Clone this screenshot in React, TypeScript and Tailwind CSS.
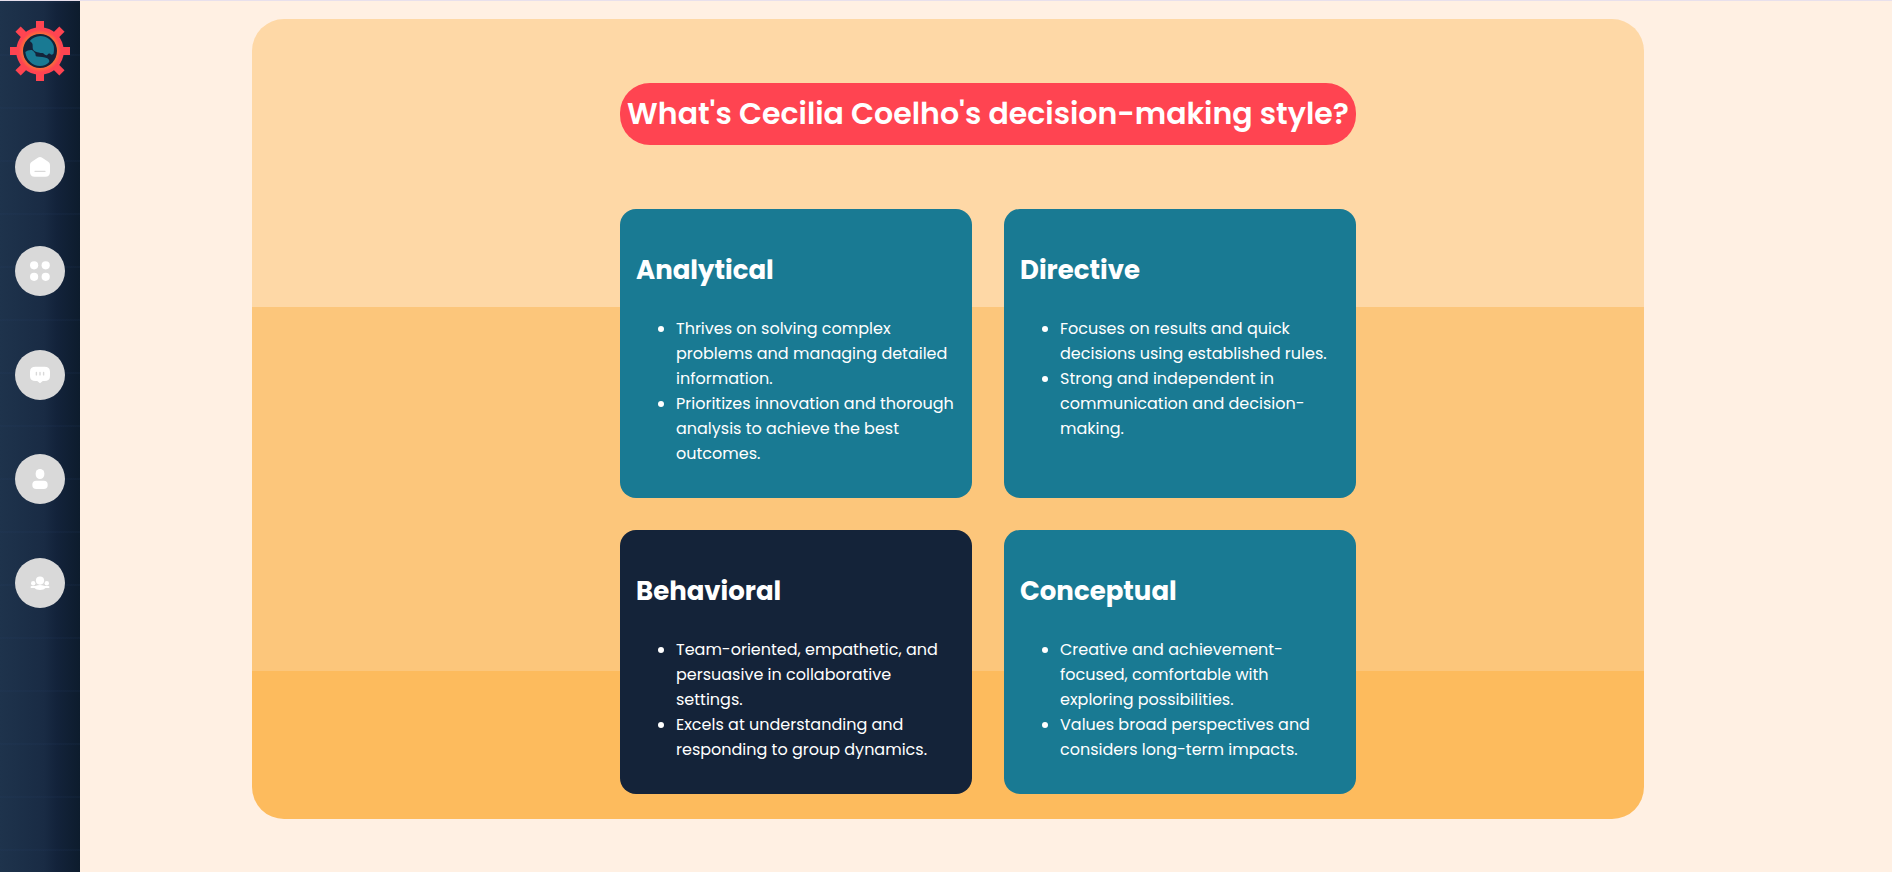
import type { ReactNode } from "react";

type Style = { name: string; traits: string[]; selected?: boolean };

const styles: Style[] = [
  {
    name: "Analytical",
    traits: [
      "Thrives on solving complex problems and managing detailed information.",
      "Prioritizes innovation and thorough analysis to achieve the best outcomes.",
    ],
  },
  {
    name: "Directive",
    traits: [
      "Focuses on results and quick decisions using established rules.",
      "Strong and independent in communication and decision-making.",
    ],
  },
  {
    name: "Behavioral",
    selected: true,
    traits: [
      "Team-oriented, empathetic, and persuasive in collaborative settings.",
      "Excels at understanding and responding to group dynamics.",
    ],
  },
  {
    name: "Conceptual",
    traits: [
      "Creative and achievement-focused, comfortable with exploring possibilities.",
      "Values broad perspectives and considers long-term impacts.",
    ],
  },
];

const navItems: { label: string; icon: ReactNode }[] = [
  {
    label: "Home",
    icon: (
      <>
        <path d="M25 15c.8 0 1.400.3 2.200.8l5.600 3.600c1.500 1 2.200 2 2.200 3.800v6.800c0 3.200-1.600 4.700-4.700 4.700H19.700c-3.100 0-4.700-1.500-4.700-4.700v-6.800c0-1.800.7-2.800 2.200-3.800l5.600-3.600c.8-.5 1.400-.8 2.200-.8z" />
        <path d="M20 29.300h10" stroke="#d9d9d9" strokeWidth="1.300" strokeLinecap="round" />
      </>
    ),
  },
  {
    label: "Dashboard",
    icon: (
      <>
        <circle cx="19.100" cy="19.300" r="4.100" />
        <circle cx="30.700" cy="19.300" r="4.100" />
        <circle cx="19.100" cy="30.800" r="4.100" />
        <circle cx="30.700" cy="30.800" r="4.100" />
      </>
    ),
  },
  {
    label: "Messages",
    icon: (
      <>
        <path d="M20.500 16.700h9c3.700 0 5.500 1.600 5.500 5v4.300c0 3.400-1.800 5-5.500 5h-1.700L25 33.200 22.200 31h-1.700c-3.700 0-5.500-1.600-5.500-5v-4.300c0-3.400 1.800-5 5.500-5z" />
        <path d="M21.400 22.500v2.400M25 22.500v2.400M28.600 22.500v2.400" stroke="#d9d9d9" strokeWidth="1.400" strokeLinecap="round" />
      </>
    ),
  },
  {
    label: "Profile",
    icon: (
      <>
        <rect x="20.700" y="15" width="8.600" height="10" rx="4.200" />
        <rect x="17.300" y="26.800" width="15.400" height="8.200" rx="4" />
      </>
    ),
  },
  {
    label: "Team",
    icon: (
      <>
        <circle cx="25" cy="22.600" r="4.100" />
        <circle cx="18.200" cy="25.300" r="2.200" />
        <circle cx="31.800" cy="25.300" r="2.200" />
        <path d="M15.700 28.200c2-.5 4 .1 5.300-.4 2.400-1 5.600-1 8 0 1.300.5 3.300-.1 5.300.4v1.700h-3.800c-1 1.300-3 2-5.500 2s-4.500-.7-5.500-2h-3.800z" />
      </>
    ),
  },
];

function Logo() {
  return (
    <svg viewBox="0 0 60 60" className="size-[60px]" aria-hidden="true">
      <defs>
        <radialGradient id="ring" gradientUnits="userSpaceOnUse" cx="30" cy="30" r="24">
          <stop offset="0.700" stopColor="#fb7038" />
          <stop offset="0.880" stopColor="#ff4451" />
        </radialGradient>
      </defs>
      <g fill="#ff4451">
        {[0, 90, 180, 270].map((a) => (
          <rect key={a} x="26" y="0" width="8" height="10" transform={`rotate(${a} 30 30)`} />
        ))}
        {[45, 135, 225, 315].map((a) => (
          <rect key={a} x="26.300" y="-1" width="7.400" height="11" transform={`rotate(${a} 30 30)`} />
        ))}
      </g>
      <circle cx="30" cy="30" r="23.800" fill="url(#ring)" />
      <circle cx="30" cy="30" r="17" fill="#14243a" />
      <g fill="#197a93">
        <path d="M19.800 20C22 17 26 14.900 30.500 14.900c6.500 0 12 4.300 13.300 10.300.3 2.800.2 5.200-.3 7.300-.6 1.300-2.200 1.700-3.500.3-1-.8-1.700-.2-2.500.9-1.400 1.700-3.300-.7-4.300-1.500-1.400-.6-3 .2-4.500-.6-2-.5-3.600-.6-5.200-2.300-1.100-1.600-.7-3.900-.9-5.800-.1-1.500-1.800-2.400-2.800-3.500z" />
        <path d="M15.300 31c1.700-1.600 4.600-2.400 6.600-2 1.600.6 2.300 2.300 3.500 3.400.3 1.400-.2 2.600 1.600 3.200 3.200.4 7.400.4 10.300 1.600 1.300.7 2.400 2.200 1.900 3.700C36.900 43.500 33.800 45 30 45c-7.500 0-13.700-5.800-14.700-14z" />
      </g>
    </svg>
  );
}

function Sidebar() {
  return (
    <aside className="flex w-20 shrink-0 flex-col items-center bg-[repeating-linear-gradient(to_bottom,rgba(40,66,110,0.1)_0px,rgba(40,66,110,0.1)_2px,transparent_2px,transparent_53px),linear-gradient(to_right,#1e334c,#192b44_55%,#13233b_70%,#0d1c2d)] pt-5">
      <a href="#home" aria-label="Start page">
        <Logo />
      </a>
      <nav aria-label="Main" className="mt-[61px] flex flex-col gap-[54px]">
        {navItems.map(({ label, icon }) => (
          <a
            key={label}
            href={`#${label.toLowerCase()}`}
            aria-label={label}
            className="block size-[50px] rounded-full bg-[#d9d9d9]"
          >
            <svg viewBox="0 0 50 50" fill="#fff" className="size-full" aria-hidden="true">
              {icon}
            </svg>
          </a>
        ))}
      </nav>
    </aside>
  );
}

function StyleCard({ name, traits, selected }: Style) {
  return (
    <article className={`rounded-2xl p-4 ${selected ? "bg-[#142339]" : "bg-[#197a93]"}`}>
      <h2 className="my-7 text-[26px] leading-[35px] font-bold">{name}</h2>
      <ul className="mb-4 list-disc pl-10 text-base leading-[25px]">
        {traits.map((trait) => (
          <li key={trait}>{trait}</li>
        ))}
      </ul>
    </article>
  );
}

export default function App() {
  return (
    <div className="flex min-h-screen border-t border-[#e8e0ec] bg-[#fff0e3] font-['Poppins','Inter',sans-serif] text-white">
      <Sidebar />
      <main className="min-w-0 flex-1 pt-[18px] pr-[248px] pb-8 pl-[172px]">
        <section className="flex justify-center rounded-[32px] bg-[linear-gradient(to_bottom,#fed8a6_36%,#fcc67b_36%,#fcc67b_81.5%,#fdbb5d_81.5%)] pt-16 pb-[25px] pl-20">
          <div className="flex w-full max-w-[736px] flex-col gap-16">
            <h1 className="rounded-[30px] bg-[#ff4451] py-[7px] text-center text-[30px] leading-[48px] font-semibold whitespace-nowrap">
              What's Cecilia Coelho's decision-making style?
            </h1>
            <div className="grid grid-cols-2 gap-8">
              {styles.map((style) => (
                <StyleCard key={style.name} {...style} />
              ))}
            </div>
          </div>
        </section>
      </main>
    </div>
  );
}
